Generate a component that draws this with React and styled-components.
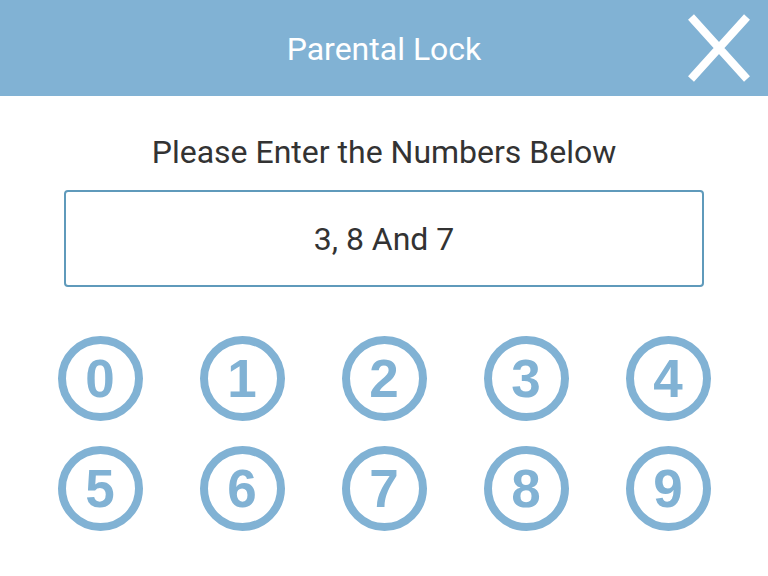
import React from "react";
import styled, { createGlobalStyle } from "styled-components";

const GlobalStyle = createGlobalStyle`
  html, body {
    margin: 0;
    padding: 0;
    background: #ffffff;
  }
  * {
    box-sizing: border-box;
  }
`;

const Page = styled.div`
  width: 768px;
  height: 576px;
  display: flex;
  flex-direction: column;
  background: #ffffff;
  font-family: Roboto, "Liberation Sans", sans-serif;
`;

const Header = styled.div`
  position: relative;
  height: 96px;
  background: #81b2d4;
  display: flex;
  align-items: center;
  justify-content: center;
`;

const Title = styled.h1`
  margin: 0;
  margin-top: 2px;
  font-size: 32px;
  font-weight: 400;
  color: #ffffff;
`;

const CloseButton = styled.button`
  position: absolute;
  top: 14px;
  right: 18px;
  width: 62px;
  height: 68px;
  padding: 0;
  border: none;
  background: transparent;
  cursor: pointer;
`;

const Body = styled.div`
  display: flex;
  flex-direction: column;
  align-items: center;
  padding-top: 34px;
`;

const Prompt = styled.p`
  margin: 0;
  font-size: 32px;
  color: #333333;
  line-height: 44px;
`;

const CodeBox = styled.div`
  width: 640px;
  height: 97px;
  margin-top: 16px;
  border: 2px solid #5f9abb;
  border-radius: 4px;
  display: flex;
  align-items: center;
  justify-content: center;
  font-size: 32px;
  color: #333333;
`;

const Keypad = styled.div`
  display: grid;
  grid-template-columns: repeat(5, 85px);
  column-gap: 57px;
  row-gap: 25px;
  margin-top: 49px;
`;

const Key = styled.button`
  width: 85px;
  height: 85px;
  padding: 0;
  border: 8px solid #81b2d4;
  border-radius: 50%;
  background: #ffffff;
  color: #81b2d4;
  font-family: "Liberation Sans", Arial, sans-serif;
  font-weight: 700;
  font-size: 53px;
  line-height: 1;
  display: flex;
  align-items: center;
  justify-content: center;
  cursor: pointer;
`;

const CloseIcon = () => (
  <svg width="62" height="68" viewBox="0 0 62 68">
    <path
      d="M3 3 L59 65 M59 3 L3 65"
      stroke="#ffffff"
      strokeWidth="8"
      fill="none"
    />
  </svg>
);

const App = () => {
  return (
    <Page>
      <GlobalStyle />
      <Header>
        <Title>Parental Lock</Title>
        <CloseButton aria-label="Close">
          <CloseIcon />
        </CloseButton>
      </Header>
      <Body>
        <Prompt>Please Enter the Numbers Below</Prompt>
        <CodeBox>3, 8 And 7</CodeBox>
        <Keypad>
          {[0, 1, 2, 3, 4, 5, 6, 7, 8, 9].map((n) => (
            <Key key={n}>{n}</Key>
          ))}
        </Keypad>
      </Body>
    </Page>
  );
};

export default App;
